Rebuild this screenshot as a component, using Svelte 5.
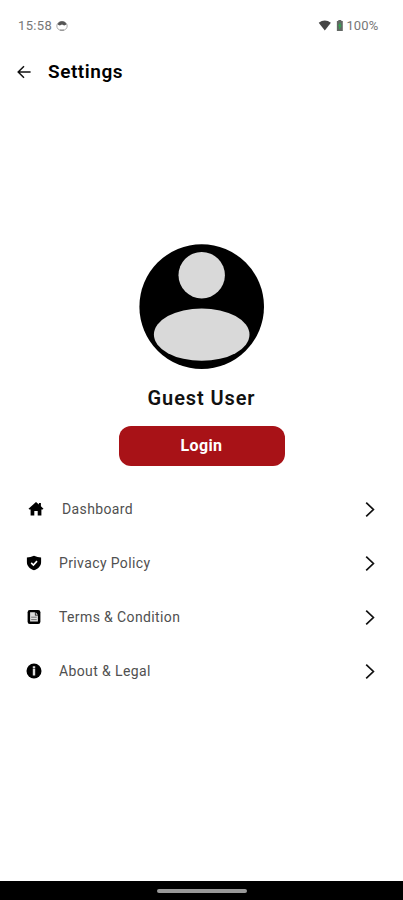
<script>
  const items = [
    { icon: 'home', label: 'Dashboard' },
    { icon: 'shield', label: 'Privacy Policy' },
    { icon: 'terms', label: 'Terms & Condition' },
    { icon: 'info', label: 'About & Legal' }
  ];
</script>

<div class="screen">
  <div class="status">
    <span class="time">15:58</span>
    <svg class="face" width="12" height="12" viewBox="0 0 12 12">
      <ellipse cx="6" cy="6" rx="5.2" ry="4.6" fill="#fff" stroke="#aaa" stroke-width="1" />
      <path d="M1.6 4.6C2.4 2.2 4.2 1.2 6 1.2s3.8 1 4.5 3.4L8.2 5.5 6 4.6 3.8 5.5z" fill="#555" />
      <path d="M4 10h4" stroke="#888" stroke-width="1" />
    </svg>
    <span class="spacer"></span>
    <svg class="wifi" width="13" height="11" viewBox="0 0 13 11">
      <path d="M.4 2.8Q6.5-1.6 12.6 2.8L6.5 10.4z" fill="#444" />
    </svg>
    <svg class="battery" width="7" height="11" viewBox="0 0 7 11">
      <path d="M2 0h3v1h1.5v10h-6V1H2z" fill="#626864" />
      <path d="M4 3L2 6.1h1.3L3 9l2-3.6H3.8z" fill="#35a853" stroke="#35a853" stroke-width=".5" />
    </svg>
    <span class="percent">100%</span>
  </div>

  <header>
    <svg width="14" height="14" viewBox="0 0 14 14" fill="none" stroke="#111" stroke-width="1.5">
      <path d="M13.6 7H1.2M7 1.2L1.2 7 7 12.8" />
    </svg>
    <h1>Settings</h1>
  </header>

  <main>
    <svg class="avatar" width="126" height="126" viewBox="0 0 126 126">
      <circle cx="62.7" cy="63.6" r="62.3" fill="#000" />
      <circle cx="62.7" cy="32.2" r="23.2" fill="#d9d9d9" />
      <ellipse cx="62.7" cy="91.6" rx="47.8" ry="26.2" fill="#d9d9d9" />
    </svg>
    <h2>Guest User</h2>
    <button>Login</button>
  </main>

  <nav>
    {#each items as item}
      <div class="row {item.icon}">
        <svg class="icon" width="16" height="16" viewBox="0 0 16 16">
          {#if item.icon === 'home'}
            <path d="M8 .9L.5 7.7 1.5 8.6H2.6V14.6H6.3V9.9H9.7V14.6H13.4V8.6H14.5L15.5 7.7 12.9 5.3V2H10.9V3.5z" />
          {:else if item.icon === 'shield'}
            <path d="M8 .7Q11.5 2.4 15.1 2.6V7.2C15.1 11 12 13.9 8 15.3 4 13.9.9 11 .9 7.2V2.6Q4.5 2.4 8 .7z" />
            <path d="M5.2 7.9l2.2 2.1L11 6.1" fill="none" stroke="#fff" stroke-width="1.6" />
          {:else if item.icon === 'terms'}
            <rect x="1.6" y="1" width="12.8" height="14" rx="2.2" />
            <path d="M4.1 3.3h4.8v3.3h3v6H4.1z" fill="#ddd" />
            <path d="M9.6 3.3l2.3 2.4H9.6z" fill="#ddd" />
            <path d="M5.2 8.2h5.5M5.2 10.6h5.5" fill="none" stroke="#555" stroke-width=".8" />
          {:else}
            <circle cx="8" cy="8" r="7.5" />
            <path d="M6.8 3.3h2.4v1.8H6.8zM6.8 5.6h2.4v6.9H6.8z" fill="#ddd" />
          {/if}
        </svg>
        <span class="label">{item.label}</span>
        <svg class="chevron" width="10" height="17" viewBox="0 0 10 17" fill="none" stroke="#111" stroke-width="1.7">
          <path d="M1.2 1.7L8.4 8.5 1.2 15.3" />
        </svg>
      </div>
    {/each}
  </nav>

  <footer><span></span></footer>
</div>

<style>
  :global(body) {
    margin: 0;
    background: #fff;
  }
  .screen {
    height: 900px;
    display: flex;
    flex-direction: column;
    background: #fff;
    font-family: Roboto, "Liberation Sans", sans-serif;
    color: #111;
  }
  .status {
    height: 51px;
    padding: 0 24px 0 18px;
    display: flex;
    align-items: center;
    box-sizing: border-box;
    font-size: 13px;
    line-height: 20px;
    color: #777;
  }
  .time {
    letter-spacing: 0.35px;
  }
  .face {
    margin-left: 4px;
  }
  .spacer {
    flex: 1;
  }
  .battery {
    margin: 0 3px 0 5px;
  }
  .percent {
    letter-spacing: 0.1px;
  }
  .wifi,
  .battery,
  .percent {
    transform: translateX(-0.7px);
  }
  header {
    height: 42px;
    padding-left: 17px;
    display: flex;
    align-items: center;
    gap: 17px;
  }
  h1,
  h2 {
    margin: 0;
    font-weight: 600;
    white-space: nowrap;
  }
  h1 {
    font-size: 19px;
    line-height: 24px;
    letter-spacing: 0.55px;
    color: #000;
  }
  main {
    margin-top: 150px;
    display: flex;
    flex-direction: column;
    align-items: center;
  }
  .avatar {
    display: block;
    overflow: visible;
  }
  h2 {
    margin-top: 16px;
    font-size: 20px;
    line-height: 26px;
    letter-spacing: 0.9px;
  }
  button {
    margin-top: 15px;
    width: 166px;
    height: 40px;
    padding: 0;
    border: 0;
    border-radius: 12px;
    background: #a81217;
    color: #fff;
    font: 700 16px/20px Roboto, sans-serif;
    letter-spacing: 0.35px;
  }
  nav {
    margin-top: 16px;
  }
  .row {
    height: 54px;
    padding: 0 28px 0 26px;
    display: flex;
    align-items: center;
  }
  .home {
    padding-left: 27.5px;
  }
  .icon {
    margin-right: 17px;
  }
  .home .icon {
    margin-right: 18.5px;
  }
  .shield .icon,
  .terms .icon,
  .info .icon {
    margin-left: -0.4px;
    margin-right: 17.4px;
    margin-top: 0.5px;
  }
  .label {
    flex: 1;
    font-size: 14px;
    line-height: 20px;
    letter-spacing: 0.38px;
    color: #505050;
  }
  .chevron {
    margin-top: 1px;
  }
  footer {
    height: 19px;
    margin-top: auto;
    background: #000;
    display: flex;
    align-items: center;
    justify-content: center;
  }
  footer span {
    width: 90px;
    height: 4px;
    border-radius: 2px;
    background: #999;
  }
</style>
